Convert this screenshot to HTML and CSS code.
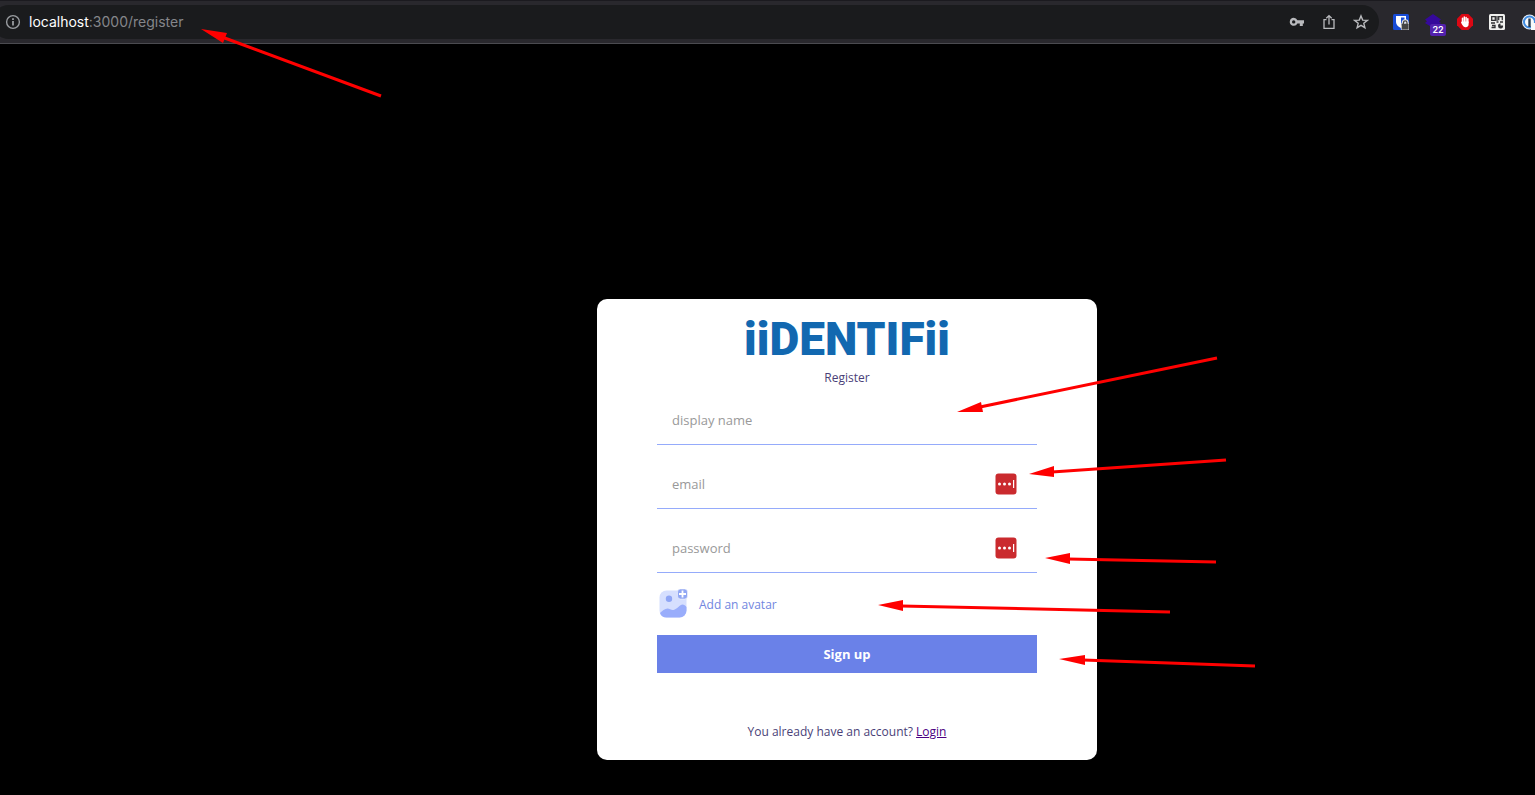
FILE: index.html
```html
<!DOCTYPE html>
<html lang="en">
<head>
<meta charset="utf-8">
<meta name="viewport" content="width=device-width, initial-scale=1">
<title>Register</title>
<link rel="stylesheet" href="styles.css">
</head>
<body>
<header class="toolbar">
  <div class="omnibox">
    <svg class="icon" viewBox="0 0 16 16" fill="none" stroke="#9a9da1" stroke-width="1.4"><circle cx="8" cy="8" r="6.4"/><path d="M8 7v4.5M8 4.2v1.7" stroke-width="1.8"/></svg>
    <p class="url"><span class="host">localhost</span>:3000/register</p>
    <div class="actions">
      <button class="tool" type="button" aria-label="Passwords"><svg class="icon" viewBox="0 0 16 16"><path fill="#b9babd" fill-rule="evenodd" d="M4.700 3.800a4 4 0 0 1 3.700 2.500H15v3.200h-1.200V12h-3V9.500H8.400A4 4 0 1 1 4.700 3.800zm0 2.400a1.700 1.700 0 1 0 0 3.400 1.700 1.700 0 0 0 0-3.400z"/></svg></button>
      <button class="tool" type="button" aria-label="Share"><svg class="icon" viewBox="0 0 16 16" fill="none" stroke="#b9babd" stroke-width="1.300"><path d="M5.500 5.600H3v8.800h10V5.600h-2.500M8 10.500V1.800M5.300 4.300 8 1.600l2.700 2.700"/></svg></button>
      <button class="tool" type="button" aria-label="Bookmark"><svg class="icon" viewBox="0 0 16 16" fill="none" stroke="#b9babd" stroke-width="1.400"><path d="m8 1.900 1.700 4.200 4.600.3-3.500 2.900 1.100 4.400L8 11.300l-3.900 2.400 1.100-4.400L1.700 6.400l4.600-.3z"/></svg></button>
    </div>
  </div>
  <div class="extensions">
    <button class="tool" type="button" aria-label="Password vault"><svg class="icon" viewBox="0 0 16 16"><rect width="16" height="16" rx="1.500" fill="#174bd6"/><path d="M3 2h10v6c0 3-2.500 5-5 6-2.500-1-5-3-5-6z" fill="#fff"/><path d="M8 3.500h3.500V8c0 2-1.500 3.300-3.500 4.300z" fill="#174bd6"/><path d="M10 10V8.700a2.200 2.200 0 0 1 4.400 0V10" fill="none" stroke="#e4e4e4" stroke-width="2.600"/><rect x="8.300" y="9.300" width="7.700" height="6.700" rx="1" fill="#444" stroke="#e4e4e4" stroke-width=".8"/><path d="M10.400 10V8.700a1.800 1.800 0 0 1 3.600 0V10" fill="none" stroke="#444" stroke-width="1.200"/></svg></button>
    <button class="tool" type="button" aria-label="Layers, 22"><svg class="icon" viewBox="0 0 16 16"><path d="m8 0 8 5.500-2 1.800 2 1.700-8 5-8-5 2-1.700-2-1.800z" fill="#35099b"/></svg><span class="badge">22</span></button>
    <button class="tool" type="button" aria-label="Ad blocker"><svg class="icon" viewBox="0 0 16 16"><path d="M4.700 0h6.600L16 4.700v6.600L11.300 16H4.700L0 11.300V4.700z" fill="#dc0814"/><path d="M5.500 8.500V4.300M7.300 8V2.900M9.100 8V3.400M10.800 8.500V4.800" stroke="#fff" stroke-width="1.500" stroke-linecap="round"/><path d="M4.700 7.500h6.900v2.700c0 1.600-1 3-2.700 3-2 0-3.200-1-4.900-4.700z" fill="#fff"/></svg></button>
    <button class="tool" type="button" aria-label="QR code"><svg class="icon" viewBox="0 0 16 16"><rect width="16" height="16" rx="1.500" fill="#f0f0ee"/><g fill="none" stroke="#303033" stroke-width="1.300"><path d="M2.700 2.700h3.600v3.600H2.700zM9.700 6.300V2.700h3.600v3.600"/><path d="M2 9h4M3 11.500h3v2H2.500M8 2v5M7.500 8h2M11 8h3"/></g><path d="M11.500 9.500v2H14a2.500 2.500 0 1 1-2.500-2z" fill="#303033"/></svg></button>
    <button class="tool" type="button" aria-label="Password manager"><svg class="icon" viewBox="0 0 16 16"><circle cx="8.500" cy="8" r="7.500" fill="#e8eef5"/><circle cx="8.500" cy="8" r="5.500" fill="#f8fafc" stroke="#3f8be0" stroke-width="2"/><path d="M7.300 4.500h2.400v8.500H7.300z" fill="#263b50"/><path d="M10 9h6v7h-6z" fill="#f8fafc"/></svg></button>
  </div>
</header>
<main class="page">
  <section class="card">
    <h1 class="logo">iiDENTIFii</h1>
    <h2 class="title">Register</h2>
    <form class="form">
      <div class="field"><input class="input" type="text" placeholder="display name" aria-label="display name"></div>
      <div class="field"><input class="input" type="email" placeholder="email" aria-label="email">
        <svg class="filler" viewBox="0 0 22 22"><rect x=".5" y=".5" width="21" height="21" rx="3" fill="#ca2a2e"/><g fill="#fff"><circle cx="4.500" cy="11" r="1.500"/><circle cx="9.500" cy="11" r="1.500"/><circle cx="14.500" cy="11" r="1.500"/><path d="M18 7h1.200v8H18z"/></g></svg></div>
      <div class="field"><input class="input" type="password" placeholder="password" aria-label="password">
        <svg class="filler" viewBox="0 0 22 22"><rect x=".5" y=".5" width="21" height="21" rx="3" fill="#ca2a2e"/><g fill="#fff"><circle cx="4.500" cy="11" r="1.500"/><circle cx="9.500" cy="11" r="1.500"/><circle cx="14.500" cy="11" r="1.500"/><path d="M18 7h1.200v8H18z"/></g></svg></div>
      <input class="file" type="file" id="avatar">
      <label class="avatar" for="avatar">
        <svg class="picture" viewBox="0 0 32 32"><rect x="2.500" y="2.500" width="27" height="27" rx="7" fill="#d6dffe"/><circle cx="12" cy="10.800" r="3.200" fill="#8fa5f5"/><path d="M3 25c2-2 5-4.500 7.500-4.500 2 0 4 2 6 1.500 3.500-.8 6.500-5.500 9-5.500 1.500 0 3 1 4 2.500v3.500a7 7 0 0 1-7 7h-13C6 29.500 3.500 27.500 3 25z" fill="#99adfb"/><rect x="20.500" y="1" width="10" height="10" rx="3" fill="#91a7f3" stroke="#fff" stroke-width=".5"/><path d="M25.500 2.500v7M22 6h7" stroke="#fff" stroke-width="1.800"/></svg>
        <span>Add an avatar</span>
      </label>
      <button class="submit" type="submit">Sign up</button>
    </form>
    <p class="note">You already have an account? <a class="link" href="#login">Login</a></p>
  </section>
</main>
<svg class="arrows" width="1535" height="795" viewBox="0 0 1535 795" aria-hidden="true">
  <g stroke="#f00" stroke-width="3"><path d="M222 37 381 96M980 407l237-49M1052 472l174-12M1068 559l148 3M901 606l269 6M1083 660l172 6"/></g>
  <g fill="#f00"><path d="m201 29 26 4-4 10zM957 412l24-10 2 10zM1029 474l25-8v11zM1045 558l25-5v11zM878 605l25-5v11zM1059 659l26-4v10z"/></g>
</svg>
</body>
</html>
```
FILE: styles.css
```css
* { box-sizing: border-box; }
body {
  position: relative;
  min-height: 100vh;
  margin: 0;
  overflow: hidden;
  background: #000;
  font-family: "Open Sans", "Noto Sans", sans-serif;
}
.toolbar {
  display: flex;
  align-items: center;
  gap: 14px;
  height: 44px;
  overflow: hidden;
  background: #29282d;
  border-top: 1px solid #1b1a1f;
  border-bottom: 1px solid #4b4b50;
}
.omnibox {
  display: flex;
  flex: 1;
  align-items: center;
  gap: 8px;
  height: 34px;
  margin-left: -8px;
  padding: 0 10px 0 13px;
  border-radius: 17px;
  background: #1a1b1d;
}
.url {
  flex: 1;
  margin: 0;
  color: #85868a;
  font: 14px/20px Inter, Roboto, sans-serif;
}
.host { color: #fff; }
.actions, .extensions { display: flex; gap: 16px; }
.extensions { margin-right: -2px; }
.tool {
  position: relative;
  flex: none;
  padding: 0;
  border: 0;
  background: none;
}
.icon { display: block; flex: none; width: 16px; height: 16px; }
.badge {
  position: absolute;
  top: 10px;
  left: 5px;
  width: 16px;
  border-radius: 2px;
  background: #5221ad;
  color: #fff;
  font: 600 9px/12px Inter, sans-serif;
  text-align: center;
}
.page {
  display: flex;
  justify-content: center;
  padding: 255px 0 35px 159px;
}
.card {
  width: 500px;
  padding: 20px 60px;
  border-radius: 10px;
  background: #fff;
  color: #4a3f78;
  font-size: 12px;
  line-height: 17px;
  text-align: center;
}
.logo {
  margin: 0 0 10px;
  color: #1268b0;
  font: 900 46px/40px Roboto, "Liberation Sans", sans-serif;
}
.title { margin: 0 0 10px; font-size: 12px; font-weight: 400; }
.form { display: flex; flex-direction: column; gap: 15px; }
.field { position: relative; display: flex; }
.input {
  width: 100%;
  height: 49px;
  padding: 15px;
  border: 0;
  border-bottom: 1px solid #95abfb;
  outline: 0;
  background: none;
  font: 13px/18px "Open Sans", "Noto Sans", sans-serif;
}
.input::placeholder { color: #999; }
.filler { position: absolute; top: 13px; right: 20px; width: 22px; height: 22px; }
.file { display: none; }
.avatar {
  display: flex;
  align-items: center;
  gap: 10px;
  color: #7186e0;
  cursor: pointer;
}
.picture { width: 32px; height: 32px; }
.submit {
  height: 38px;
  padding: 0;
  border: 0;
  background: #6a81e8;
  color: #fff;
  font: bold 13px/18px "Open Sans", "Noto Sans", sans-serif;
}
.note { margin: 50px 0 0; }
.link { color: #4b0082; }
.arrows { position: absolute; top: 0; left: 0; pointer-events: none; }
```
